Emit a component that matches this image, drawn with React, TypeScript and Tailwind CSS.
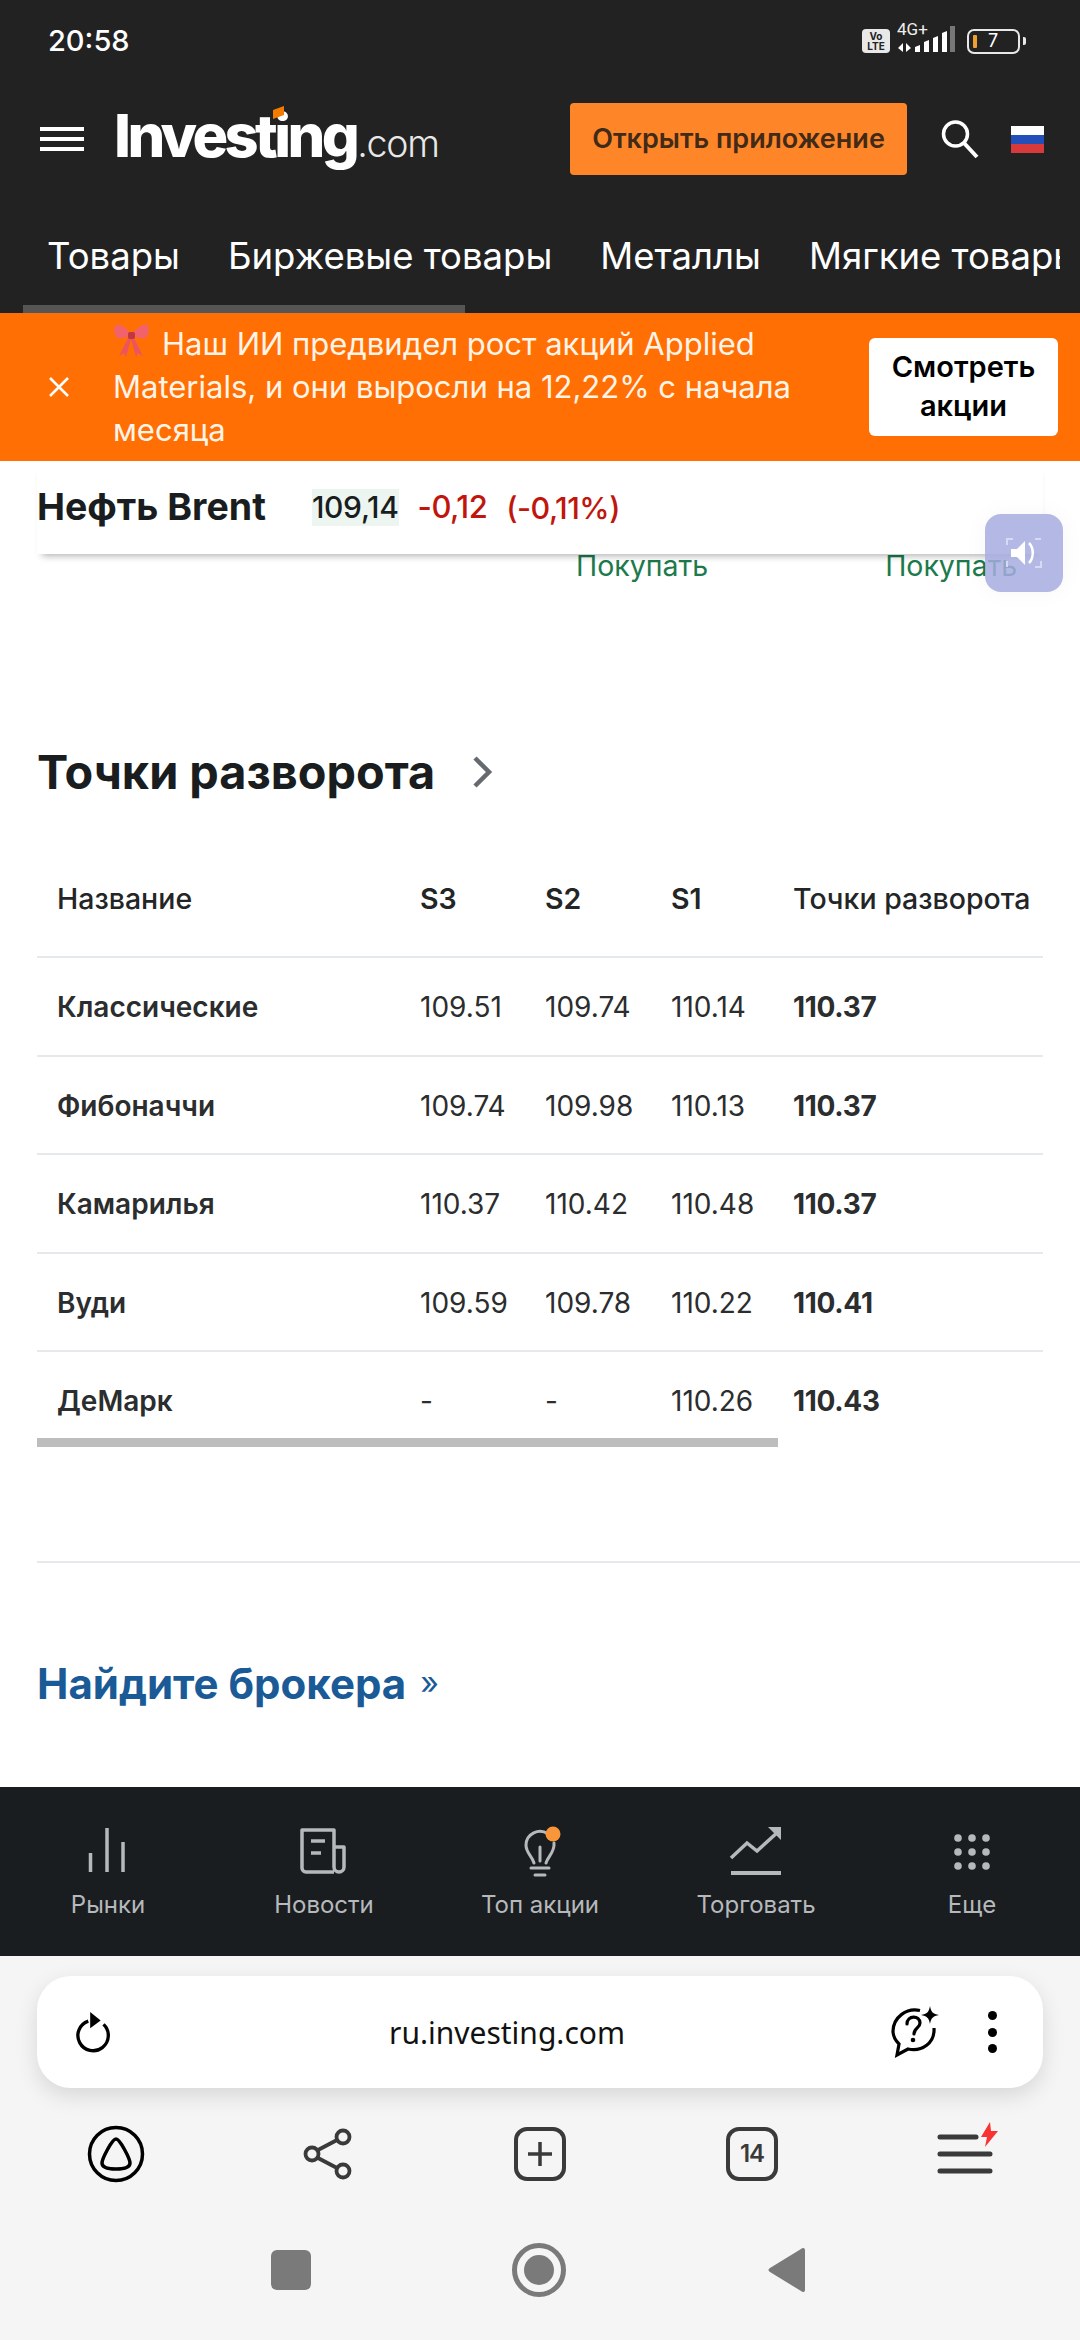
const TABS = ["Товары", "Биржевые товары", "Металлы", "Мягкие товары"];

const ROWS = [
  { name: "Классические", s3: "109.51", s2: "109.74", s1: "110.14", pivot: "110.37" },
  { name: "Фибоначчи", s3: "109.74", s2: "109.98", s1: "110.13", pivot: "110.37" },
  { name: "Камарилья", s3: "110.37", s2: "110.42", s1: "110.48", pivot: "110.37" },
  { name: "Вуди", s3: "109.59", s2: "109.78", s1: "110.22", pivot: "110.41" },
  { name: "ДеМарк", s3: "-", s2: "-", s1: "110.26", pivot: "110.43" },
];

function StatusBar() {
  return (
    <div className="flex h-[70px] items-center justify-between pl-[48px] pr-[54px] pt-[12px] text-white">
      <span className="text-[29px] leading-[42px] font-medium">20:58</span>
      <div className="flex items-center">
        <div className="flex h-[24px] w-[28px] flex-col items-center justify-center rounded-[4px] bg-[#e8e8e8] text-[10px] leading-[10px] font-bold text-[#222222]">
          <span>Vo</span>
          <span>LTE</span>
        </div>
        <svg className="ml-[7px] -mt-[9px]" width="60" height="35" viewBox="0 -3 60 35">
          <text x="0" y="13" fill="#eeeeee" fontSize="17" fontFamily="Roboto, sans-serif">4G+</text>
          <path d="M6 21v9l-5-4zM9 21v9l5-4z" fill="#fff" />
          <path d="M18 30v-5l5-2v7zM27 30V20l5-2v12zM36 30V16l5-2v16zM45 30V11l5-2v21z" fill="#fff" />
          <rect x="53" y="4" width="5" height="26" fill="#777777" />
        </svg>
        <div className="ml-[10px] flex h-[25px] w-[53px] items-center rounded-[7px] border-2 border-[#e8e8e8] pl-[4px]">
          <div className="h-[13px] w-[4px] rounded-[1px] bg-[#f0a030]" />
          <span className="ml-[11px] text-[18px] leading-[20px] text-white">7</span>
        </div>
        <div className="ml-[3px] h-[8px] w-[3px] rounded-r-[2px] bg-[#e8e8e8]" />
      </div>
    </div>
  );
}

function Logo() {
  return (
    <div className="relative ml-[30px] flex items-baseline font-['Inter'] text-white">
      <span className="text-[59.5px] leading-[60px] font-extrabold tracking-[-3.6px]">Investing</span>
      <span className="ml-[1px] text-[37.5px] leading-[60px] font-light tracking-[-1.2px] text-[#e8e8e8]">.com</span>
      <div className="absolute left-[159px] top-[3px] h-[9px] w-[11px] skew-y-[-20deg] bg-[#f57a00]" />
    </div>
  );
}

function Header() {
  return (
    <div className="bg-[#222222]">
      <StatusBar />
      <div className="mt-[33px] flex h-[72px] items-center pl-[40px]">
        <div className="flex w-[44px] flex-col gap-[6px]">
          <div className="h-[4px] bg-white" />
          <div className="h-[4px] bg-white" />
          <div className="h-[4px] bg-white" />
        </div>
        <Logo />
        <button className="ml-auto h-[72px] w-[337px] rounded-[4px] bg-[#ff8628] text-[27px] font-semibold text-[#422a18]">
          Открыть приложение
        </button>
        <svg className="ml-[33px]" width="40" height="40" viewBox="0 0 40 40" fill="none" stroke="#fff">
          <circle cx="15.5" cy="15" r="12" strokeWidth="3.5" />
          <path d="M24 24l13 14" strokeWidth="4" />
        </svg>
        <div className="ml-[31px] mr-[36px] flex h-[27px] w-[33px] flex-col">
          <div className="flex-1 bg-white" />
          <div className="flex-1 bg-[#2350b8]" />
          <div className="flex-1 bg-[#d8393a]" />
        </div>
      </div>
      <div className="mr-[20px] mt-[56px] flex h-[74px] gap-[48px] overflow-hidden pl-[47px] text-[36.5px] leading-[50px] text-white">
        {TABS.map((tab) => (
          <span key={tab} className="shrink-0">{tab}</span>
        ))}
      </div>
      <div className="ml-[23px] h-[8px] w-[442px] bg-[#555555]" />
    </div>
  );
}

function Bow() {
  return (
    <svg className="mr-[12px] inline-block align-[-4px]" width="37" height="36" viewBox="0 0 37 36">
      <path d="M18 12C12 2 4 0 2 3c-2 4 0 11 3 12 5 1 9-1 13-3zM19 12C25 2 33 0 35 3c2 4 0 11-3 12-5 1-9-1-13-3z" fill="#f2626c" />
      <path d="M16 13L6 33l5-3 2 4 5-18 5 18 2-4 5 3-10-20z" fill="#ec5560" />
      <rect x="15" y="9" width="7" height="7" rx="2" fill="#c23640" />
    </svg>
  );
}

function PromoBanner() {
  return (
    <div className="flex h-[148px] items-center bg-[#ff6f03]">
      <svg className="ml-[48px] shrink-0" width="22" height="22" viewBox="0 0 22 22" stroke="#fff" strokeWidth="2.5">
        <path d="M2 2l18 18M20 2L2 20" />
      </svg>
      <p className="ml-[43px] w-[710px] shrink-0 pb-[2px] text-[31px] leading-[43px] text-[#fff4e8]">
        <Bow />
        Наш ИИ предвидел рост акций Applied Materials, и они выросли на 12,22% с начала месяца
      </p>
      <button className="ml-[46px] h-[98px] w-[189px] rounded-[6px] bg-white pb-[2px] text-[29px] leading-[39px] font-semibold text-black">
        Смотреть<br />акции
      </button>
    </div>
  );
}

function PriceBar() {
  return (
    <>
      <div className="relative z-10 mx-[37px] flex h-[93px] items-center bg-white shadow-[0_7px_7px_-5px_rgba(0,0,0,0.3)]">
        <span className="text-[37.5px] font-bold text-[#1a1d20]">Нефть Brent</span>
        <span className="ml-[46px] h-[37px] bg-[#edf5f1] text-[30px] leading-[37px] font-medium tracking-[-0.3px] text-[#1a1d20]">109,14</span>
        <span className="ml-[19px] text-[31px] font-medium tracking-[-0.5px] text-[#c0160e]">-0,12</span>
        <span className="ml-[19px] text-[30.5px] font-medium tracking-[-0.5px] text-[#c0160e]">(-0,11%)</span>
      </div>
      <div className="flex h-[24px] items-center text-[28.5px] text-[#1c7a4c]">
        <span className="ml-[576px]">Покупать</span>
        <span className="ml-[177px]">Покупать</span>
      </div>
    </>
  );
}

function PivotTable() {
  return (
    <div className="mx-[37px] mt-[35px]">
      <div className="grid h-[116px] grid-cols-[363px_125px_126px_122px_1fr] items-center border-b-2 border-[#e6e9eb] pl-[20px] text-[28.5px] font-medium text-[#232526]">
        <span>Название</span>
        <span className="font-semibold">S3</span>
        <span className="font-semibold">S2</span>
        <span className="font-semibold">S1</span>
        <span className="whitespace-nowrap">Точки разворота</span>
      </div>
      {ROWS.map((row, i) => (
        <div
          key={row.name}
          className={i < ROWS.length - 1 ? "grid h-[98.5px] grid-cols-[363px_125px_126px_122px_1fr] items-center border-b-2 border-[#e6e9eb] pl-[20px] pt-[2px] text-[28px] text-[#2b2d2e]" : "grid h-[86px] grid-cols-[363px_125px_126px_122px_1fr] items-center pl-[20px] pt-[12px] text-[28px] text-[#2b2d2e]"}
        >
          <span className="font-semibold">{row.name}</span>
          <span>{row.s3}</span>
          <span>{row.s2}</span>
          <span>{row.s1}</span>
          <span className="font-bold tracking-[-0.3px]">{row.pivot}</span>
        </div>
      ))}
      <div className="h-[9px] w-[741px] bg-[#bdbdbd]" />
    </div>
  );
}

function BottomNav() {
  const stroke = "#b6b9bc";
  return (
    <div className="grid h-[169px] shrink-0 grid-cols-5 bg-[#1a1d20] pt-[38px] text-center text-[24px] leading-[34px] text-[#b6b9bc]">
      <div className="flex flex-col items-center">
        <svg width="60" height="54" viewBox="0 0 60 54" stroke={stroke} strokeWidth="3.5" fill="none">
          <path d="M12.5 47V28M29 47V3M45 47V17" />
        </svg>
        <span className="mt-[9px]">Рынки</span>
      </div>
      <div className="flex flex-col items-center">
        <svg width="60" height="54" viewBox="0 0 60 54" stroke={stroke} strokeWidth="3.5" fill="none" strokeLinejoin="round">
          <path d="M40 47H12a4 4 0 0 1-4-4V5h32v37a5 5 0 0 0 10 0V22H40" />
          <path d="M17 16h14M17 28h10" />
        </svg>
        <span className="mt-[9px]">Новости</span>
      </div>
      <div className="flex flex-col items-center">
        <svg width="60" height="54" viewBox="0 0 60 54" stroke={stroke} strokeWidth="3" fill="none" strokeLinecap="round">
          <path d="M24 38c-2-7-8-10-8-18a14 14 0 0 1 22-11M44 18c1 9-6 13-8 20" />
          <path d="M30 36V22M21 43h18M25 50h10" />
          <circle cx="43" cy="9" r="7.5" fill="#f9963a" stroke="none" />
        </svg>
        <span className="mt-[9px]">Топ акции</span>
      </div>
      <div className="flex flex-col items-center">
        <svg width="60" height="54" viewBox="0 0 60 54" stroke={stroke} strokeWidth="3.5" fill="none">
          <path d="M5 33l16-15 10 8 22-20" />
          <path d="M42 2h13v13z" fill={stroke} stroke="none" />
          <path d="M5 48h50" strokeWidth="4" />
        </svg>
        <span className="mt-[9px]">Торговать</span>
      </div>
      <div className="flex flex-col items-center">
        <svg width="60" height="54" viewBox="0 0 60 54" fill={stroke}>
          <circle cx="16" cy="13" r="3.8" /><circle cx="30" cy="13" r="3.8" /><circle cx="44" cy="13" r="3.8" />
          <circle cx="16" cy="27" r="3.8" /><circle cx="30" cy="27" r="3.8" /><circle cx="44" cy="27" r="3.8" />
          <circle cx="16" cy="41" r="3.8" /><circle cx="30" cy="41" r="3.8" /><circle cx="44" cy="41" r="3.8" />
        </svg>
        <span className="mt-[9px]">Еще</span>
      </div>
    </div>
  );
}

function BrowserChrome() {
  const dark = "#3a3a3a";
  return (
    <div className="h-[384px] shrink-0 bg-[#f5f5f5] pt-[20px]">
      <div className="mx-[37px] flex h-[112px] items-center rounded-[34px] bg-white pl-[38px] pr-[46px] shadow-[0_8px_22px_rgba(0,0,0,0.12)]">
        <svg width="38" height="44" viewBox="0 0 40 44" fill="none" stroke="#000" strokeWidth="3.5">
          <path d="M14 10.5A16 16 0 1 0 30 14" />
          <path d="M16 1l11 9-11 8z" fill="#000" stroke="none" />
        </svg>
        <span className="flex-1 pl-[12px] text-center font-['Noto_Sans'] text-[30px] text-[#111111]">ru.investing.com</span>
        <svg width="52" height="52" viewBox="0 0 52 52" fill="none" stroke="#000" strokeWidth="3.2">
          <path d="M31 4.500A22 22 0 0 0 4 25c0 5 2 9 6 13l-2 11 11-6c14 3 27-6 26-21" />
          <path d="M18 18c0-9 13-9 13-1 0 5-6 5-6 11" strokeLinecap="round" />
          <circle cx="24" cy="34" r="2.3" fill="#000" stroke="none" />
          <path d="M41 0c1 6 3 8 9 9-6 1-8 3-9 9-1-6-3-8-9-9 6-1 8-3 9-9z" fill="#000" stroke="none" />
        </svg>
        <div className="ml-[47px] flex w-[9px] flex-col gap-[7.5px]">
          <div className="h-[9px] rounded-full bg-black" />
          <div className="h-[9px] rounded-full bg-black" />
          <div className="h-[9px] rounded-full bg-black" />
        </div>
      </div>
      <div className="mt-[34px] grid h-[64px] grid-cols-[repeat(5,212px)] items-center justify-items-center pl-[10px]">
        <svg width="60" height="60" viewBox="0 0 60 60" fill="none" stroke="#000" strokeWidth="3.5">
          <circle cx="30" cy="30" r="26.5" />
          <path d="M30 15c-4 0-14 20-14 24 0 5 6 6 14 6s14-1 14-6c0-4-10-24-14-24z" strokeLinejoin="round" />
        </svg>
        <svg width="52" height="52" viewBox="0 0 52 52" fill="none" stroke={dark} strokeWidth="3.8">
          <circle cx="10" cy="26" r="6.5" />
          <circle cx="41" cy="9" r="6.5" />
          <circle cx="41" cy="43" r="6.5" />
          <path d="M16 22l19-10M16 30l19 10" />
        </svg>
        <div className="flex h-[54px] w-[52px] items-center justify-center rounded-[13px] border-[4px] border-[#3a3a3a]">
          <svg width="26" height="26" viewBox="0 0 26 26" stroke={dark} strokeWidth="3.5">
            <path d="M13 1v24M1 13h24" />
          </svg>
        </div>
        <div className="flex h-[54px] w-[52px] items-center justify-center rounded-[13px] border-[4px] border-[#3a3a3a] text-[24px] font-semibold tracking-[-1px] text-[#3a3a3a]">
          14
        </div>
        <svg className="ml-[8px]" width="62" height="64" viewBox="0 0 62 64" fill="none" stroke={dark} strokeWidth="5" strokeLinecap="round">
          <path d="M3 15h36M3 32h50M3 49h50" />
          <path d="M53 0L44 15h6l-2 10 13-16h-7z" fill="#f73333" stroke="none" />
        </svg>
      </div>
      <div className="mt-[57px] grid h-[54px] grid-cols-[repeat(3,248px)] items-center justify-items-center pl-[167px]">
        <div className="h-[40px] w-[40px] rounded-[6px] bg-[#7a7a7a]" />
        <div className="flex h-[54px] w-[54px] items-center justify-center rounded-full border-[5px] border-[#7a7a7a]">
          <div className="h-[30px] w-[30px] rounded-full bg-[#7a7a7a]" />
        </div>
        <svg width="38" height="46" viewBox="0 0 38 46">
          <path d="M37 3v40c0 2-2 3-4 1L2 25c-2-1-2-3 0-4L33 2c2-2 4-1 4 1z" fill="#7a7a7a" />
        </svg>
      </div>
    </div>
  );
}

export default function App() {
  return (
    <div className="relative flex h-[2340px] w-[1080px] flex-col overflow-hidden bg-white font-['Inter',sans-serif]">
      <Header />
      <PromoBanner />
      <main className="flex min-h-0 flex-1 flex-col">
        <PriceBar />
        <div className="mx-[37px] mt-[159px] flex h-[70px] items-center">
          <h2 className="text-[46.8px] font-bold text-[#1a1d20]">Точки разворота</h2>
          <svg className="ml-[36px]" width="24" height="34" viewBox="0 0 24 34" fill="none" stroke="#666a6e" strokeWidth="4.5">
            <path d="M4 3l14 14L4 31" />
          </svg>
        </div>
        <PivotTable />
        <div className="ml-[37px] mt-[114px] h-[2px] bg-[#e6e9eb]" />
        <div className="mx-[37px] mt-[90px] flex h-[60px] items-center text-[42px] font-bold text-[#1a5a96]">
          Найдите брокера
          <span className="ml-[14px] text-[32px] font-normal">»</span>
        </div>
      </main>
      <BottomNav />
      <BrowserChrome />
      <div className="absolute left-[985px] top-[514px] z-20 flex h-[78px] w-[78px] items-center justify-center rounded-[16px] bg-[#a6addf]/85 shadow-[0_0_24px_rgba(0,0,0,0.04)]">
        <svg width="40" height="40" viewBox="0 0 40 40" fill="none">
          <path d="M9 6H3v6M31 6h6M37 28v6h-6M3 28v6" stroke="#d6daf3" strokeWidth="2" />
          <path d="M7 16h6l8-8v24l-8-8H7z" fill="#fff" />
          <path d="M25 10c5 5 5 15 0 20" stroke="#fff" strokeWidth="2.5" />
        </svg>
      </div>
    </div>
  );
}
